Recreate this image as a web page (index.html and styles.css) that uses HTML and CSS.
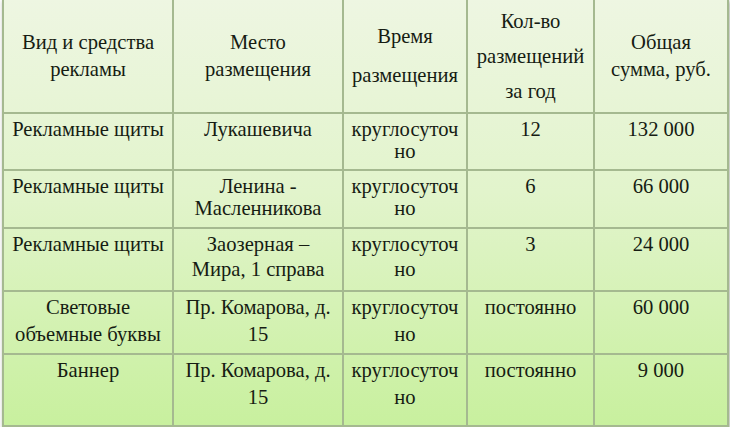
FILE: index.html
```html
<!DOCTYPE html>
<html lang="ru">
<head>
<meta charset="utf-8">
<title>Реклама</title>
<link rel="stylesheet" href="styles.css">
</head>
<body>
<table class="ads">
  <colgroup>
    <col class="c1"><col class="c2"><col class="c3"><col class="c4"><col class="c5">
  </colgroup>
  <thead>
    <tr class="head">
      <th class="lh27">Вид и средства<br>рекламы</th>
      <th class="lh27">Место<br>размещения</th>
      <th class="lh39">Время<br>размещения</th>
      <th class="lh35">Кол-во<br>размещений<br>за год</th>
      <th class="lh27">Общая<br>сумма, руб.</th>
    </tr>
  </thead>
  <tbody>
    <tr class="r1">
      <td>Рекламные щиты</td>
      <td>Лукашевича</td>
      <td>круглосуточ<br>но</td>
      <td>12</td>
      <td>132 000</td>
    </tr>
    <tr class="r2">
      <td>Рекламные щиты</td>
      <td>Ленина -<br>Масленникова</td>
      <td>круглосуточ<br>но</td>
      <td>6</td>
      <td>66 000</td>
    </tr>
    <tr class="r3">
      <td>Рекламные щиты</td>
      <td>Заозерная –<br>Мира, 1 справа</td>
      <td>круглосуточ<br>но</td>
      <td>3</td>
      <td>24 000</td>
    </tr>
    <tr class="r4">
      <td>Световые<br>объемные буквы</td>
      <td>Пр. Комарова, д.<br>15</td>
      <td>круглосуточ<br>но</td>
      <td>постоянно</td>
      <td>60 000</td>
    </tr>
    <tr class="r5">
      <td>Баннер</td>
      <td>Пр. Комарова, д.<br>15</td>
      <td>круглосуточ<br>но</td>
      <td>постоянно</td>
      <td>9 000</td>
    </tr>
  </tbody>
</table>
</body>
</html>
```
FILE: styles.css
```css
html {
  margin: 0;
  padding: 0;
  background: #ffffff;
}
body {
  margin: 0;
  padding: 0 3px 0 2px;
  overflow: hidden;
  font-family: "Liberation Serif", "Times New Roman", serif;
  font-size: 20px;
}
.ads {
  margin-top: -2px;
  width: 725px;
  height: 428px;
  table-layout: fixed;
  border-collapse: collapse;
  font-family: inherit;
  font-size: 20.6px;
  color: #161c13;
  background: linear-gradient(180deg, #eef6e2 0%, #e2f4cc 45%, #c8f09e 100%);
  box-shadow: 1px 3px 4px rgba(60, 70, 50, 0.45);
}
.c1 { width: 170px; }
.c2 { width: 170px; }
.c3 { width: 124px; }
.c4 { width: 127px; }
.c5 { width: 134px; }
.ads th, .ads td {
  font-family: "Liberation Serif", "Times New Roman", serif;
  border: 2px solid #a5b990;
  text-align: center;
  padding: 0 1px;
  font-weight: normal;
}
.ads th {
  vertical-align: middle;
}
.head { height: 114px; }
.lh27 { line-height: 27px; }
.lh39 { line-height: 39px; }
.lh35 { line-height: 35px; }
.ads td {
  vertical-align: top;
}
.r1 { height: 57px; }
.r1 td { line-height: 22px; padding-top: 4px; }
.r2 { height: 58px; }
.r2 td { line-height: 22px; padding-top: 4px; }
.r3 { height: 63px; }
.r3 td { line-height: 25px; padding-top: 3px; }
.r4 { height: 63px; }
.r4 td { line-height: 27px; padding-top: 2px; }
.r5 { height: 72px; }
.r5 td { line-height: 27px; padding-top: 2px; }
```
